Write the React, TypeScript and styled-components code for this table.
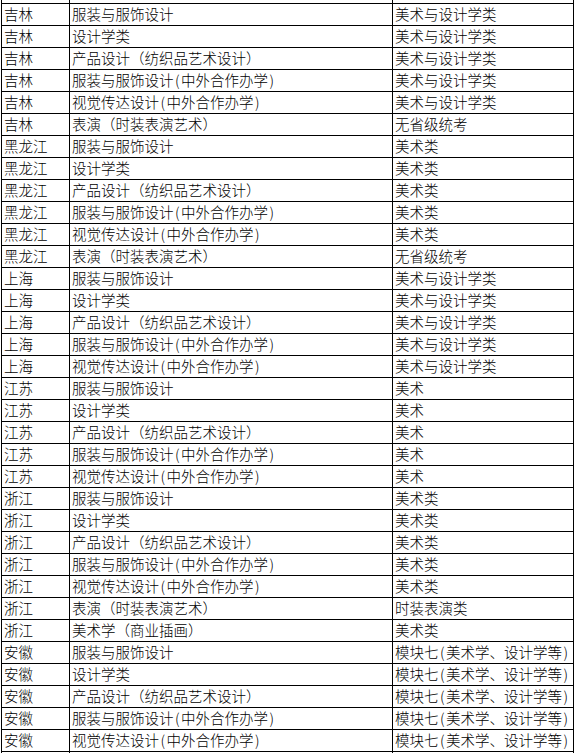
import React from "react";
import styled, { createGlobalStyle } from "styled-components";

const Global = createGlobalStyle`
  html, body {
    margin: 0;
    padding: 0;
    background: #ffffff;
  }
  body {
    font-family: "Noto Sans CJK SC", "Noto Sans", sans-serif;
    color: #000000;
  }
`;

const Viewport = styled.div`
  width: 575px;
  height: 753px;
  overflow: hidden;
  padding-left: 1px;
  box-sizing: border-box;
`;

const Sheet = styled.div`
  display: flex;
  flex-direction: column;
  width: 573px;
  border-left: 1px solid #000;
  box-sizing: border-box;
`;

const Row = styled.div<{ $stub?: boolean }>`
  display: grid;
  grid-template-columns: 68px 323px 181px;
  height: ${(p) => (p.$stub ? "4px" : "22px")};
  flex: none;
  box-sizing: border-box;
  border-bottom: 1px solid #000;
`;

const Cell = styled.div`
  box-sizing: border-box;
  border-right: 1px solid #000;
  padding-left: 2px;
  font-size: 14.5px;
  font-weight: 300;
  line-height: 20px;
  white-space: nowrap;
  overflow: hidden;
`;

const Paren = styled.span`
  padding: 0 1.5px;
`;

function Text({ value }: { value: string }) {
  const parts = value.split(/([()])/).filter((s) => s.length > 0);
  return (
    <>
      {parts.map((p, i) =>
        p === "(" || p === ")" ? <Paren key={i}>{p}</Paren> : <React.Fragment key={i}>{p}</React.Fragment>
      )}
    </>
  );
}

type Entry = [string, string, string];

const majors5 = [
  "服装与服饰设计",
  "设计学类",
  "产品设计（纺织品艺术设计）",
  "服装与服饰设计(中外合作办学)",
  "视觉传达设计(中外合作办学)",
];

const perform = "表演（时装表演艺术）";

const rows: Entry[] = [
  ...majors5.map((m) => ["吉林", m, "美术与设计学类"] as Entry),
  ["吉林", perform, "无省级统考"],
  ...majors5.map((m) => ["黑龙江", m, "美术类"] as Entry),
  ["黑龙江", perform, "无省级统考"],
  ...majors5.map((m) => ["上海", m, "美术与设计学类"] as Entry),
  ...majors5.map((m) => ["江苏", m, "美术"] as Entry),
  ...majors5.map((m) => ["浙江", m, "美术类"] as Entry),
  ["浙江", perform, "时装表演类"],
  ["浙江", "美术学（商业插画）", "美术类"],
  ...majors5.map((m) => ["安徽", m, "模块七(美术学、设计学等)"] as Entry),
];

export default function App() {
  return (
    <>
      <Global />
      <Viewport>
        <Sheet>
          <Row $stub>
            <Cell />
            <Cell />
            <Cell />
          </Row>
          {rows.map(([prov, major, exam], i) => (
            <Row key={i}>
              <Cell>{prov}</Cell>
              <Cell>
                <Text value={major} />
              </Cell>
              <Cell>
                <Text value={exam} />
              </Cell>
            </Row>
          ))}
          <Row>
            <Cell />
            <Cell />
            <Cell />
          </Row>
        </Sheet>
      </Viewport>
    </>
  );
}
